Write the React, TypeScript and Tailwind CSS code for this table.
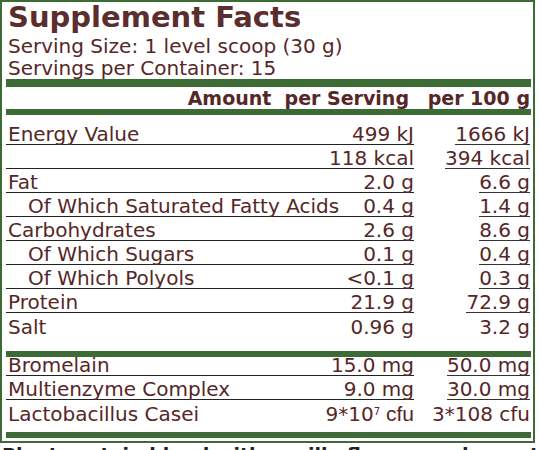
import React from "react";

type Row = {
  label: string;
  serving: React.ReactNode;
  per100: string;
  indent?: boolean;
  line?: boolean;
};

const nutrients: Row[] = [
  { label: "Energy Value", serving: "499 kJ", per100: "1666 kJ", line: true },
  { label: "", serving: "118 kcal", per100: "394 kcal", line: true },
  { label: "Fat", serving: "2.0 g", per100: "6.6 g", line: true },
  { label: "Of Which Saturated Fatty Acids", serving: "0.4 g", per100: "1.4 g", indent: true, line: true },
  { label: "Carbohydrates", serving: "2.6 g", per100: "8.6 g", line: true },
  { label: "Of Which Sugars", serving: "0.1 g", per100: "0.4 g", indent: true, line: true },
  { label: "Of Which Polyols", serving: "<0.1 g", per100: "0.3 g", indent: true, line: true },
  { label: "Protein", serving: "21.9 g", per100: "72.9 g", line: true },
  { label: "Salt", serving: "0.96 g", per100: "3.2 g" },
];

const extras: Row[] = [
  { label: "Bromelain", serving: "15.0 mg", per100: "50.0 mg", line: true },
  { label: "Multienzyme Complex", serving: "9.0 mg", per100: "30.0 mg", line: true },
  {
    label: "Lactobacillus Casei",
    serving: (
      <>
        9*10<sup className="text-[10px] -top-[6px]">7</sup>
        <span className="font-['Liberation_Sans',sans-serif] text-[21px]"> cfu</span>
      </>
    ),
    per100: "3*108 cfu",
  },
];

function FactRow({ row, h = "h-[24px]" }: { row: Row; h?: string }) {
  return (
    <div className={`flex ${h} items-end text-[20px] leading-[20px]`}>
      <div
        className={`flex flex-1 items-end justify-between self-stretch pl-[2px] ${
          row.line ? "border-b border-[#222]" : ""
        }`}
      >
        <span className={`whitespace-nowrap ${row.indent ? "pl-[20px]" : ""}`}>{row.label}</span>
        <span className="whitespace-nowrap">{row.serving}</span>
      </div>
      <div className="flex w-[117px] justify-end self-stretch items-end pr-[1px]">
        <span className={`whitespace-nowrap ${row.line ? "border-b border-[#333]" : ""}`}>{row.per100}</span>
      </div>
    </div>
  );
}

export default function App() {
  return (
    <div className="h-[450px] w-[540px] overflow-hidden bg-white font-['DejaVu_Sans',Verdana,sans-serif] text-[#552727]">
      <div className="w-[535px] border-2 border-[#3d6b35] pb-[3px] pl-[4px] pr-[2px]">
        <div className="h-[33px] pl-[2px] text-[29px] font-bold leading-[30px] text-[#5c2d2d]">
          Supplement Facts
        </div>
        <div className="pl-[2px] text-[20px] leading-[22px]">
          <div>Serving Size: 1 level scoop (30 g)</div>
          <div>Servings per Container: 15</div>
        </div>

        <div className="h-[8px] bg-[#3d6b35]" />
        <div className="flex h-[22px] text-[19px] font-bold leading-[22px]">
          <div className="flex-1 pr-[5px] text-right whitespace-nowrap">Amount&nbsp; per Serving</div>
          <div className="w-[117px] pr-[1px] text-right whitespace-nowrap">per 100 g</div>
        </div>
        <div className="h-[6px] bg-[#3d6b35]" />

        <div className="mt-[6px]">
          {nutrients.map((r, i) => (
            <FactRow key={i} row={r} />
          ))}
        </div>

        <div className="mt-[14px] h-[6px] bg-[#3d6b35]" />
        <FactRow row={extras[0]} h="h-[19px]" />
        <FactRow row={extras[1]} />
        <FactRow row={extras[2]} />
        <div className="mt-[8px] h-[6px] bg-[#3d6b35]" />
      </div>
      <div className="mt-[1px] whitespace-nowrap pl-[2px] text-[19px] font-bold leading-[22px] text-[#222]">
        Plant protein blend with vanilla flavour and sweeteners
      </div>
    </div>
  );
}
